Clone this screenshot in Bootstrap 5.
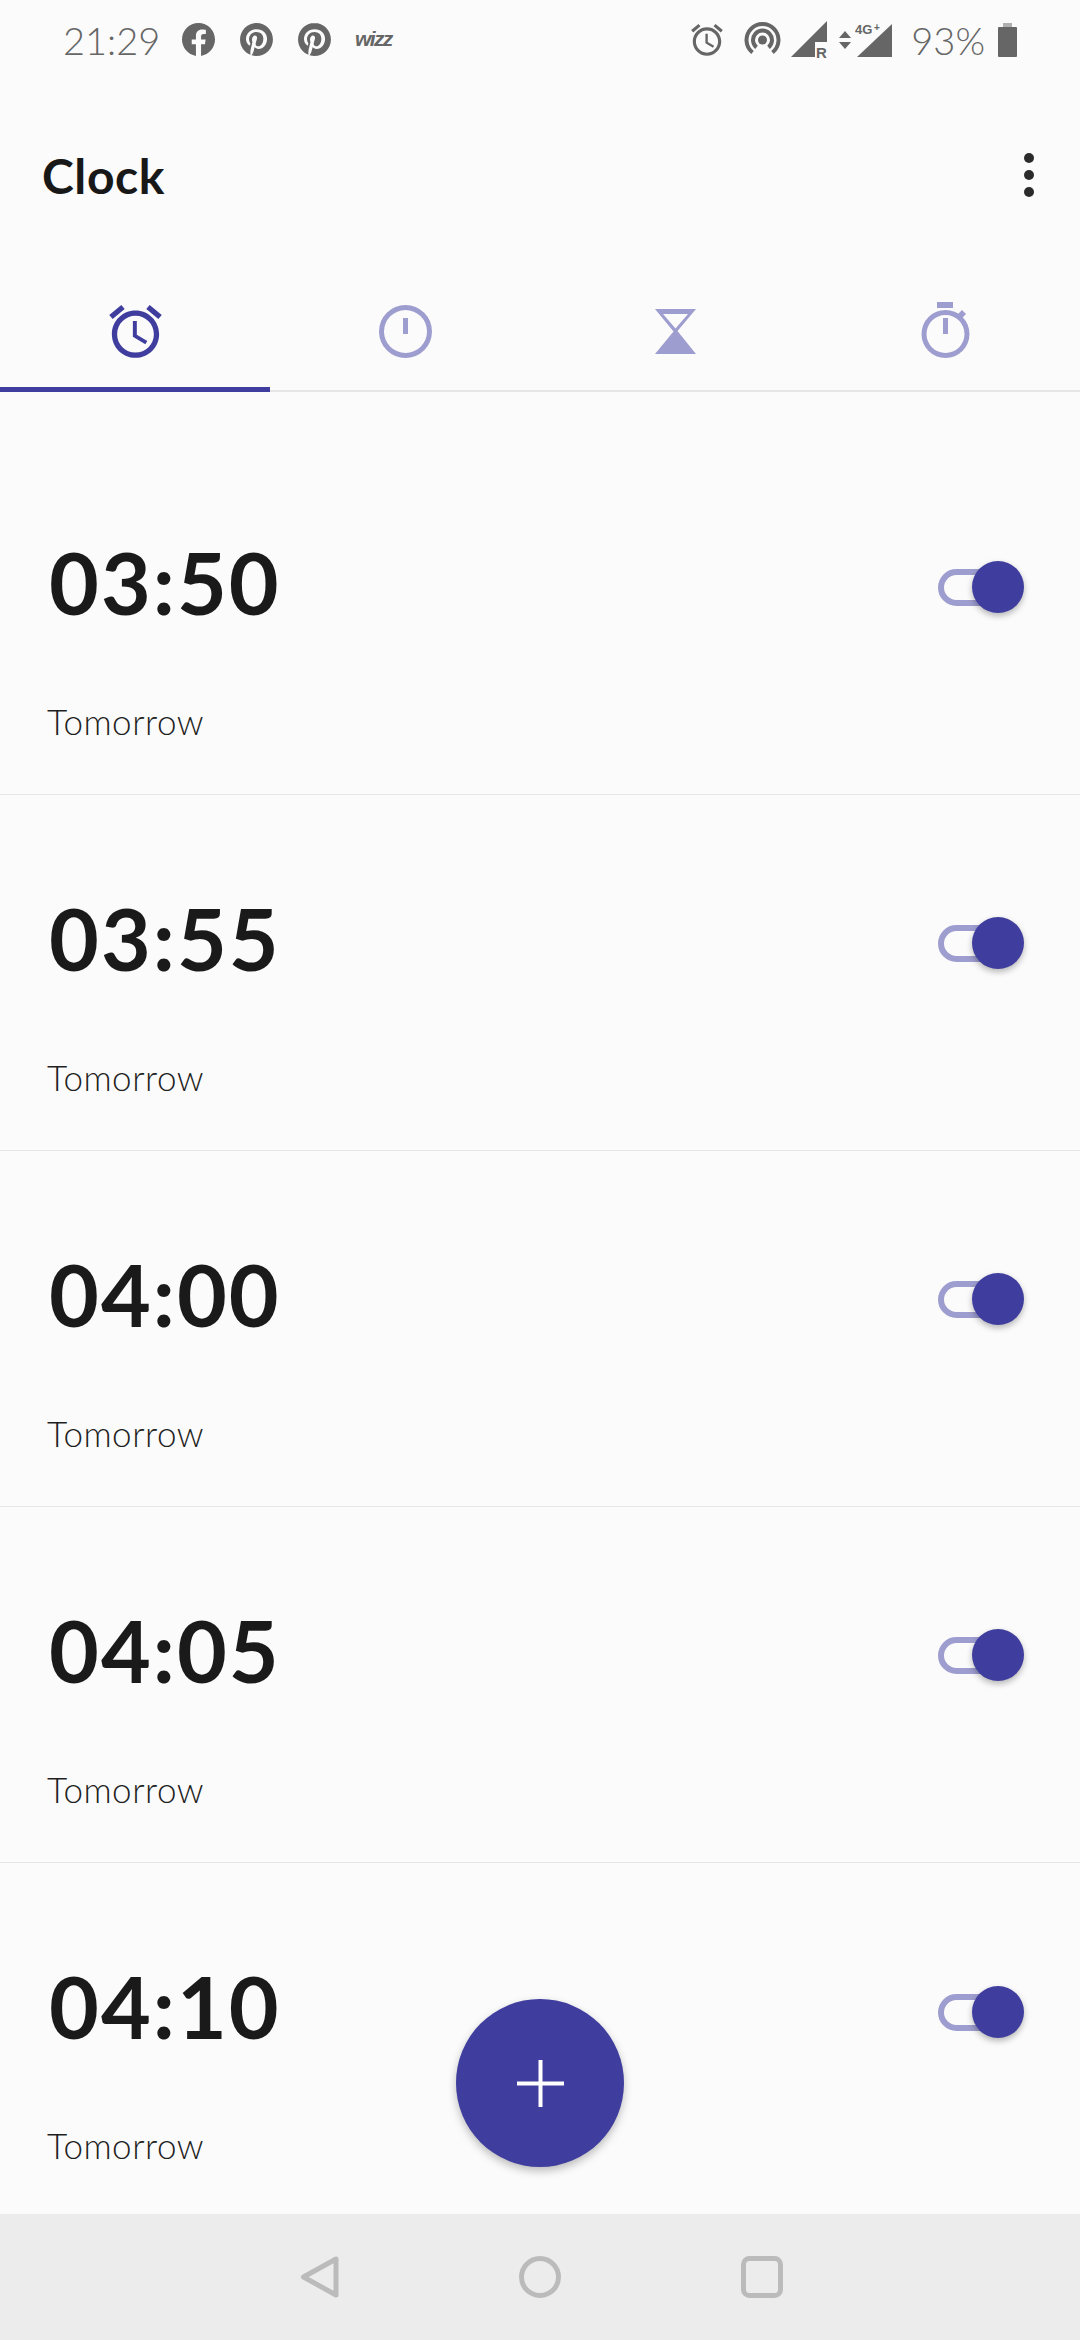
<!DOCTYPE html>
<html lang="en">
<head>
  <meta charset="UTF-8">
  <title>Clock</title>
  <meta name="viewport" content="width=device-width, initial-scale=1">
  <link href="https://cdn.jsdelivr.net/npm/bootstrap@5.3.3/dist/css/bootstrap.min.css" rel="stylesheet">
  <style>
    body { background: #fbfbfb; font-family: "Lato", "Open Sans", sans-serif; overflow: hidden; }
    .phone { height: 2340px; }

    .status-bar { height: 80px; padding: 0 63px; color: #666; }
    .status-bar svg { display: block; fill: #666; flex: none; }
    .status-text { font-size: 38px; font-weight: 300; line-height: 1; }
    .gap-fb { margin-left: 22px; }
    .gap-pin { margin-left: 25px; }
    .gap-wizz { margin-left: 24px; }
    .gap-hot { margin-left: 18px; }
    .gap-sig { margin-left: 10px; }
    .gap-arrow { margin-left: 8px; }
    .gap-net { margin-left: 4px; }
    .gap-pct { margin-left: 18px; }
    .gap-batt { margin-left: 13px; }
    .hot-rings { fill: none; stroke: #666; stroke-width: 4; }
    .status-bar svg .hot-rings { fill: none; }
    .batt-cap { opacity: .5; }

    .app-bar { height: 190px; padding: 0 44px 0 42px; }
    .app-title { font-size: 48px; font-weight: 700; color: #181818; margin: 0 0 -4px; line-height: 1; letter-spacing: .6px; }
    .more-dots { width: 10px; margin-right: 2px; margin-top: 8px; }
    .more-dots span { display: block; width: 10px; height: 10px; border-radius: 50%; background: #2b2b2b; margin-bottom: 7px; }

    .clock-tabs { height: 123px; border-bottom: 2px solid #e6e6e6; flex-wrap: nowrap; }
    .clock-tabs .nav-link { height: 123px; padding: 31px 0 0; border-bottom: 5px solid transparent; border-radius: 0; display: flex; justify-content: center; }
    .clock-tabs .nav-link.active { border-bottom-color: #3f3d9e; }
    .clock-tabs svg { display: block; }
    .tab-on { fill: #3f3d9e; }
    .tab-off { fill: #9e9dcf; }

    .alarm-list { padding-top: 47px; overflow: hidden; min-height: 0; }
    .alarm-row { height: 356px; flex: none; background: transparent; border: 0; border-bottom: 2px solid #e6e6e6; padding: 0 56px 0 47px; }
    .alarm-row:last-child { border-bottom: 0; }
    .alarm-time { font-size: 86px; font-weight: 700; color: #1a1a1a; line-height: 100px; margin: 0 0 0 2px; padding-top: 39px; letter-spacing: 2px; }
    .alarm-when { font-size: 35px; font-weight: 300; color: #1f1f1f; line-height: 40px; margin-top: 69px; letter-spacing: .5px; }

    .alarm-switch { position: relative; width: 86px; height: 52px; flex: none; margin-top: -59px; }
    .alarm-switch::before { content: ""; position: absolute; left: 0; top: 8px; width: 65px; height: 37px; border: 6px solid #9e9dcf; border-radius: 19px; }
    .alarm-switch::after { content: ""; position: absolute; right: 0; top: 0; width: 52px; height: 52px; border-radius: 50%; background: #3f3d9e; box-shadow: 0 3px 6px rgba(0,0,0,.28); }

    .add-btn { position: absolute; left: 456px; top: 1999px; width: 168px; height: 168px; padding: 0; border: 0; border-radius: 50%; background: #3f3d9e; box-shadow: 0 4px 8px rgba(0,0,0,.25); }
    .add-btn svg { display: block; margin: auto; }

    .nav-keys { height: 126px; background: #ececec; flex: none; padding-bottom: 42px; gap: 180px; }
    .nav-keys svg { display: block; fill: none; stroke: #bbb; stroke-width: 5; stroke-linejoin: round; }
  </style>
</head>
<body>
  <div class="phone d-flex flex-column position-relative">
    <div class="status-bar d-flex align-items-center flex-none">
      <span class="status-text">21:29</span>
      <svg class="gap-fb" width="33" height="33" viewBox="0 0 24 24"><path d="M24 12.073c0-6.627-5.373-12-12-12s-12 5.373-12 12c0 5.99 4.388 10.954 10.125 11.854v-8.385H7.078v-3.47h3.047V9.43c0-3.007 1.792-4.669 4.533-4.669 1.312 0 2.686.235 2.686.235v2.953H15.83c-1.491 0-1.956.925-1.956 1.874v2.25h3.328l-.532 3.47h-2.796v8.385C19.612 23.027 24 18.062 24 12.073z"/></svg>
      <svg class="gap-pin" width="33" height="33" viewBox="0 0 24 24"><path d="M12.017 0C5.396 0 .029 5.367.029 11.987c0 5.079 3.158 9.417 7.618 11.162-.105-.949-.199-2.403.041-3.439.219-.937 1.406-5.957 1.406-5.957s-.359-.72-.359-1.781c0-1.663.967-2.911 2.168-2.911 1.024 0 1.518.769 1.518 1.688 0 1.029-.653 2.567-.992 3.992-.285 1.193.6 2.165 1.775 2.165 2.128 0 3.768-2.245 3.768-5.487 0-2.861-2.063-4.869-5.008-4.869-3.41 0-5.409 2.562-5.409 5.199 0 1.033.394 2.143.889 2.741.099.12.112.225.085.345-.09.375-.293 1.199-.334 1.363-.053.225-.172.271-.401.165-1.495-.69-2.433-2.878-2.433-4.646 0-3.776 2.748-7.252 7.92-7.252 4.158 0 7.392 2.967 7.392 6.923 0 4.135-2.607 7.462-6.233 7.462-1.214 0-2.354-.629-2.758-1.379l-.749 2.848c-.269 1.045-1.004 2.352-1.498 3.146 1.123.345 2.306.535 3.55.535 6.607 0 11.985-5.365 11.985-11.987C23.97 5.39 18.592.026 11.985.026L12.017 0z"/></svg>
      <svg class="gap-pin" width="33" height="33" viewBox="0 0 24 24"><path d="M12.017 0C5.396 0 .029 5.367.029 11.987c0 5.079 3.158 9.417 7.618 11.162-.105-.949-.199-2.403.041-3.439.219-.937 1.406-5.957 1.406-5.957s-.359-.72-.359-1.781c0-1.663.967-2.911 2.168-2.911 1.024 0 1.518.769 1.518 1.688 0 1.029-.653 2.567-.992 3.992-.285 1.193.6 2.165 1.775 2.165 2.128 0 3.768-2.245 3.768-5.487 0-2.861-2.063-4.869-5.008-4.869-3.41 0-5.409 2.562-5.409 5.199 0 1.033.394 2.143.889 2.741.099.12.112.225.085.345-.09.375-.293 1.199-.334 1.363-.053.225-.172.271-.401.165-1.495-.69-2.433-2.878-2.433-4.646 0-3.776 2.748-7.252 7.92-7.252 4.158 0 7.392 2.967 7.392 6.923 0 4.135-2.607 7.462-6.233 7.462-1.214 0-2.354-.629-2.758-1.379l-.749 2.848c-.269 1.045-1.004 2.352-1.498 3.146 1.123.345 2.306.535 3.55.535 6.607 0 11.985-5.365 11.985-11.987C23.97 5.39 18.592.026 11.985.026L12.017 0z"/></svg>
      <svg class="gap-wizz" width="48" height="28" viewBox="0 0 48 28"><text x="0" y="20" font-family="Liberation Sans" font-size="21" font-weight="700" font-style="italic" letter-spacing="-1.600">wizz</text></svg>

      <svg class="ms-auto" width="38" height="38" viewBox="0 0 24 24"><path d="M22 5.72l-4.6-3.86-1.29 1.53 4.6 3.86L22 5.72zM7.88 3.39L6.6 1.86 2 5.71l1.29 1.53 4.59-3.85zM12.5 8H11v6l4.75 2.85.75-1.23-4-2.37V8zM12 4c-4.97 0-9 4.03-9 9s4.03 9 9 9 9-4.03 9-9-4.03-9-9-9zm0 16c-3.87 0-7-3.13-7-7s3.13-7 7-7 7 3.13 7 7-3.13 7-7 7z"/></svg>
      <svg class="gap-hot" width="37" height="36" viewBox="0 0 37 36"><circle cx="18.5" cy="18" r="4.500"/><path class="hot-rings" d="M12.500 25.400A9.500 9.500 0 1 1 24.500 25.400M8.500 30.500A16 16 0 1 1 28.500 30.500"/></svg>
      <svg class="gap-sig" width="40" height="40" viewBox="0 0 40 40"><path d="M0 37 36 1V22H24V37Z"/><text x="25" y="38" font-family="Liberation Sans" font-size="15" font-weight="700">R</text></svg>
      <svg class="gap-arrow" width="12" height="18" viewBox="0 0 12 18"><path d="M6 0 12 7H0ZM6 18 0 11H12Z"/></svg>
      <svg class="gap-net" width="38" height="36" viewBox="0 0 38 36"><path d="M2 35 37 2V35Z"/><text x="0" y="12" font-family="Liberation Sans" font-size="13" font-weight="700">4G</text><text x="19" y="9" font-family="Liberation Sans" font-size="10" font-weight="700">+</text></svg>
      <span class="status-text gap-pct">93%</span>
      <svg class="gap-batt" width="19" height="34" viewBox="0 0 19 34"><path class="batt-cap" d="M5 0h9v4H5z"/><path d="M1 4H18a1 1 0 0 1 1 1V33a1 1 0 0 1-1 1H1a1 1 0 0 1-1-1V5a1 1 0 0 1 1-1Z"/></svg>
    </div>

    <div class="app-bar d-flex align-items-center justify-content-between">
      <h1 class="app-title">Clock</h1>
      <div class="more-dots"><span></span><span></span><span></span></div>
    </div>

    <ul class="nav nav-fill clock-tabs">
      <li class="nav-item"><a class="nav-link active" href="#"><svg class="tab-on" width="63" height="63" viewBox="0 0 24 24"><path d="M22 5.72l-4.6-3.86-1.29 1.53 4.6 3.86L22 5.72zM7.88 3.39L6.6 1.86 2 5.71l1.29 1.53 4.59-3.85zM12.5 8H11v6l4.75 2.85.75-1.23-4-2.37V8zM12 4c-4.97 0-9 4.03-9 9s4.03 9 9 9 9-4.03 9-9-4.03-9-9-9zm0 16c-3.87 0-7-3.13-7-7s3.13-7 7-7 7 3.13 7 7-3.13 7-7 7z"/></svg></a></li>
      <li class="nav-item"><a class="nav-link" href="#"><svg class="tab-off" width="63" height="63" viewBox="0 0 63 63"><path fill-rule="evenodd" d="M31.5 5a26.500 26.500 0 1 0 0 53 26.500 26.500 0 0 0 0-53Zm0 5a21.500 21.500 0 1 1 0 43 21.500 21.500 0 0 1 0-43Z"/><path d="M29 18h5v16h-5z"/></svg></a></li>
      <li class="nav-item"><a class="nav-link" href="#"><svg class="tab-off" width="63" height="63" viewBox="0 0 63 63"><path fill-rule="evenodd" d="M11 9H52L33.500 31 52 54H11L29.500 31.500ZM19 14 31.500 28.500 44 14Z"/></svg></a></li>
      <li class="nav-item"><a class="nav-link" href="#"><svg class="tab-off" width="63" height="63" viewBox="0 0 63 63"><path d="M23 2h16v6H23zM29 18h5v16h-5zM48 10l4 4-5 5-4-4z"/><path fill-rule="evenodd" d="M31.500 10a24 24 0 1 0 0 48 24 24 0 0 0 0-48Zm0 5a19 19 0 1 1 0 38 19 19 0 0 1 0-38Z"/></svg></a></li>
    </ul>

    <div class="alarm-list list-group list-group-flush flex-grow-1" id="alarmList"></div>

    <button class="add-btn" type="button" aria-label="Add alarm"><svg width="47" height="47" viewBox="0 0 47 47"><path d="M21.500 0h4v47h-4zM0 21.500h47v4H0z" fill="#fff"/></svg></button>

    <div class="nav-keys d-flex align-items-end justify-content-center">
      <svg width="42" height="42" viewBox="0 0 42 42"><path d="M6.500 21 39 3V39Z"/></svg>
      <svg width="42" height="42" viewBox="0 0 42 42"><circle cx="21" cy="21" r="18.500"/></svg>
      <svg width="42" height="42" viewBox="0 0 42 42"><rect x="2.500" y="2.500" width="37" height="37" rx="6"/></svg>
    </div>
  </div>

  <script>
    const alarms = ["03:50", "03:55", "04:00", "04:05", "04:10"];
    document.getElementById("alarmList").innerHTML = alarms.map(t =>
      '<div class="list-group-item alarm-row d-flex align-items-center justify-content-between">' +
        '<div><p class="alarm-time">' + t + '</p><div class="alarm-when">Tomorrow</div></div>' +
        '<div class="alarm-switch"></div>' +
      '</div>').join("");
  </script>
</body>
</html>
